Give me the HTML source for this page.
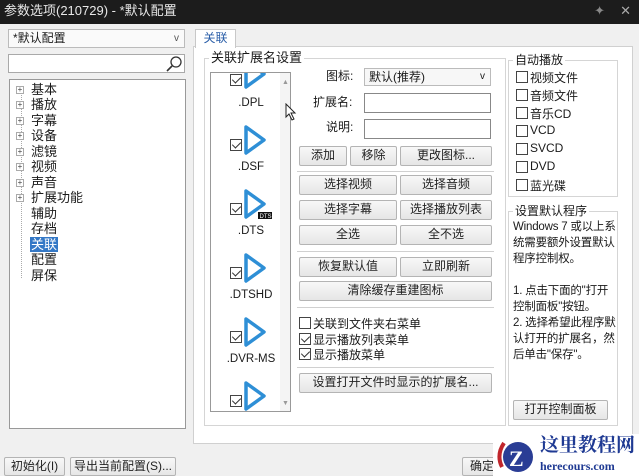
<!DOCTYPE html>
<html><head><meta charset="utf-8"><style>
*{box-sizing:border-box;margin:0;padding:0}
body{width:639px;height:476px;position:relative;overflow:hidden;background:#f0f0f0;font-family:"Liberation Sans","Noto Sans CJK SC",sans-serif;font-size:12px;color:#1a1a1a}
.a{position:absolute}
.title{left:0;top:0;width:639px;height:24px;background:#1c1c1c;color:#e8e8e8;font-size:13px;line-height:22px;padding-left:4px}
.box{position:absolute;background:#fff;border:1px solid #a9a9a9}
.btn{position:absolute;background:linear-gradient(#f8f8f8,#e6e6e6);border:1px solid #b4b4b4;border-radius:2px;text-align:center;line-height:17px;font-size:12px;color:#222;white-space:nowrap}
.grp{position:absolute;border:1px solid #d5d5d5}
.gl{position:absolute;background:#fff;padding:0 2px;line-height:14px}
.cb{position:absolute;width:12px;height:12px;border:1px solid #444;background:#fff}
.ck::after{content:"";position:absolute;left:3px;top:0px;width:4px;height:7px;border:solid #333;border-width:0 1.5px 1.5px 0;transform:rotate(45deg)}
.sep{position:absolute;height:1px;background:#d0d0d0}
.ti{position:absolute;left:22px;line-height:15px;font-size:13px}
.pl{position:absolute;width:8px;height:8px;border:1px solid #aaa;left:7px;font-size:8px;line-height:6px;text-align:center;color:#444;background:#fff}
.lab{position:absolute;font-size:11.5px;text-align:center;width:60px}
</style></head><body>
<div class="a title">参数选项(210729) - *默认配置<span style="position:absolute;right:34px;color:#888">✦</span><span style="position:absolute;right:8px;color:#aaa">✕</span></div>

<div class="box" style="left:8px;top:29px;width:177px;height:19px;border-color:#bbb;background:#fafafa;line-height:17px;padding-left:4px">*默认配置<span style="position:absolute;right:5px;font-size:10px;color:#555">v</span></div>
<div class="box" style="left:8px;top:54px;width:177px;height:19px">
<svg class="a" style="right:2px;top:1px" width="16" height="16"><circle cx="10" cy="6" r="5" fill="none" stroke="#333" stroke-width="1.3"/><line x1="6" y1="10" x2="1" y2="15" stroke="#333" stroke-width="1.6"/></svg></div>
<div class="box" style="left:9px;top:79px;width:177px;height:350px;border-color:#999">
<div class="a" style="left:11px;top:10px;width:1px;height:188px;border-left:1px dotted #aaa"></div>
</div>
<div class="a" style="left:9px;top:82px;width:177px;height:345px">
<div class="pl" style="top:4px">+</div><div class="ti" style="top:0">基本</div>
<div class="pl" style="top:19px">+</div><div class="ti" style="top:15px">播放</div>
<div class="pl" style="top:35px">+</div><div class="ti" style="top:31px">字幕</div>
<div class="pl" style="top:50px">+</div><div class="ti" style="top:46px">设备</div>
<div class="pl" style="top:66px">+</div><div class="ti" style="top:62px">滤镜</div>
<div class="pl" style="top:81px">+</div><div class="ti" style="top:77px">视频</div>
<div class="pl" style="top:97px">+</div><div class="ti" style="top:93px">声音</div>
<div class="pl" style="top:112px">+</div><div class="ti" style="top:108px">扩展功能</div>
<div class="ti" style="top:124px">辅助</div>
<div class="ti" style="top:139px">存档</div>
<div class="ti" style="top:155px;background:#3478c6;color:#fff;padding:0 1px;left:21px">关联</div>
<div class="ti" style="top:170px">配置</div>
<div class="ti" style="top:186px">屏保</div>
</div>

<div class="box" style="left:193px;top:46px;width:440px;height:398px;border-color:#d0d0d0"></div>
<div class="a" style="left:195px;top:29px;width:41px;height:19px;background:#fff;border:1px solid #c8c8c8;border-bottom:none;text-align:center;line-height:17px;color:#2a5ea8">关联</div>

<div class="grp" style="left:204px;top:58px;width:302px;height:368px"></div>
<div class="gl" style="left:209px;top:51px;font-size:13px">关联扩展名设置</div>
<div class="box" style="left:210px;top:72px;width:81px;height:340px;border-color:#999;overflow:hidden">
<div class="a" style="left:69px;top:0;width:10px;height:338px;background:#f4f4f4"></div>
<div class="a" style="left:71px;top:6px;font-size:7px;color:#999">▲</div>
<div class="a" style="left:71px;top:327px;font-size:7px;color:#999">▼</div>
<svg class="a" style="left:0;top:0" width="70" height="340">
<g fill="none" stroke="#2e8fd6" stroke-width="3.5" stroke-linejoin="round">
<path d="M35 -12 L53 1 L35 14 Z"/>
<path d="M35 54 L53 67 L35 80 Z"/>
<path d="M35 118 L53 131 L35 144 Z"/>
<path d="M35 182 L53 195 L35 208 Z"/>
<path d="M35 246 L53 259 L35 272 Z"/>
<path d="M35 310 L53 323 L35 336 Z"/>
</g>
<rect x="47" y="139" width="14" height="7" fill="#111"/>
<text x="48.5" y="145" font-size="6" fill="#fff" font-family="Liberation Sans">DTS</text>
</svg>
<div class="cb ck" style="left:19px;top:1px"></div>
<div class="cb ck" style="left:19px;top:66px"></div>
<div class="cb ck" style="left:19px;top:130px"></div>
<div class="cb ck" style="left:19px;top:194px"></div>
<div class="cb ck" style="left:19px;top:258px"></div>
<div class="cb ck" style="left:19px;top:322px"></div>
<div class="lab" style="left:10px;top:24px">.DPL</div>
<div class="lab" style="left:10px;top:88px">.DSF</div>
<div class="lab" style="left:10px;top:152px">.DTS</div>
<div class="lab" style="left:10px;top:216px">.DTSHD</div>
<div class="lab" style="left:10px;top:280px">.DVR-MS</div>
</div>
<svg class="a" style="left:285px;top:103px" width="12" height="18"><path d="M1 1 L1 14 L4 11 L7 17 L9 16 L6 10 L10 10 Z" fill="#fff" stroke="#222"/></svg>

<div class="a" style="left:326px;top:68px;line-height:17px">图标:</div>
<div class="box" style="left:364px;top:68px;width:127px;height:18px;background:#f7f7f7;border-color:#bbb;line-height:16px;padding-left:4px">默认(推荐)<span style="position:absolute;right:5px;font-size:10px">v</span></div>
<div class="a" style="left:313px;top:94px;line-height:17px">扩展名:</div>
<div class="box" style="left:364px;top:93px;width:127px;height:20px;border-color:#888"></div>
<div class="a" style="left:326px;top:119px;line-height:17px">说明:</div>
<div class="box" style="left:364px;top:119px;width:127px;height:20px;border-color:#888"></div>

<div class="btn" style="left:299px;top:146px;width:48px;height:20px">添加</div>
<div class="btn" style="left:350px;top:146px;width:47px;height:20px">移除</div>
<div class="btn" style="left:400px;top:146px;width:92px;height:20px">更改图标...</div>
<div class="sep" style="left:297px;top:171px;width:197px"></div>
<div class="btn" style="left:299px;top:175px;width:98px;height:20px">选择视频</div>
<div class="btn" style="left:400px;top:175px;width:92px;height:20px">选择音频</div>
<div class="btn" style="left:299px;top:200px;width:98px;height:20px">选择字幕</div>
<div class="btn" style="left:400px;top:200px;width:92px;height:20px">选择播放列表</div>
<div class="btn" style="left:299px;top:225px;width:98px;height:20px">全选</div>
<div class="btn" style="left:400px;top:225px;width:92px;height:20px">全不选</div>
<div class="sep" style="left:297px;top:251px;width:197px"></div>
<div class="btn" style="left:299px;top:257px;width:98px;height:20px">恢复默认值</div>
<div class="btn" style="left:400px;top:257px;width:92px;height:20px">立即刷新</div>
<div class="btn" style="left:299px;top:281px;width:193px;height:20px">清除缓存重建图标</div>
<div class="sep" style="left:297px;top:307px;width:197px"></div>
<div class="cb" style="left:299px;top:317px"></div><div class="a" style="left:313px;top:315px">关联到文件夹右菜单</div>
<div class="cb ck" style="left:299px;top:333px"></div><div class="a" style="left:313px;top:331px">显示播放列表菜单</div>
<div class="cb ck" style="left:299px;top:348px"></div><div class="a" style="left:313px;top:346px">显示播放菜单</div>
<div class="sep" style="left:297px;top:367px;width:197px"></div>
<div class="btn" style="left:299px;top:373px;width:193px;height:20px">设置打开文件时显示的扩展名...</div>

<div class="grp" style="left:508px;top:60px;width:110px;height:137px"></div>
<div class="gl" style="left:513px;top:53px">自动播放</div>
<div class="cb" style="left:516px;top:71px"></div><div class="a" style="left:530px;top:69px">视频文件</div>
<div class="cb" style="left:516px;top:89px"></div><div class="a" style="left:530px;top:87px">音频文件</div>
<div class="cb" style="left:516px;top:107px"></div><div class="a" style="left:530px;top:105px">音乐CD</div>
<div class="cb" style="left:516px;top:125px"></div><div class="a" style="left:530px;top:123px">VCD</div>
<div class="cb" style="left:516px;top:143px"></div><div class="a" style="left:530px;top:141px">SVCD</div>
<div class="cb" style="left:516px;top:161px"></div><div class="a" style="left:530px;top:159px">DVD</div>
<div class="cb" style="left:516px;top:179px"></div><div class="a" style="left:530px;top:177px">蓝光碟</div>

<div class="grp" style="left:508px;top:211px;width:110px;height:215px"></div>
<div class="gl" style="left:513px;top:204px">设置默认程序</div>
<div class="a" style="left:513px;top:219px;line-height:16px;font-size:11.5px;white-space:nowrap;letter-spacing:-0.2px">Windows 7 或以上系<br>统需要额外设置默认<br>程序控制权。<br><br>1. 点击下面的"打开<br>控制面板"按钮。<br>2. 选择希望此程序默<br>认打开的扩展名，然<br>后单击"保存"。</div>
<div class="btn" style="left:513px;top:400px;width:95px;height:20px">打开控制面板</div>

<div class="btn" style="left:4px;top:457px;width:61px;height:19px">初始化(I)</div>
<div class="btn" style="left:70px;top:457px;width:106px;height:19px">导出当前配置(S)...</div>
<div class="btn" style="left:462px;top:457px;width:40px;height:19px">确定</div>

<div class="a" style="left:493px;top:434px;width:146px;height:42px;background:#fff"></div>
<svg class="a" style="left:494px;top:435px" width="46" height="41"><path d="M10 8 Q2 20 8 32" fill="none" stroke="#c0262c" stroke-width="4"/><circle cx="24" cy="22" r="15" fill="#2a3d95"/><text x="15" y="31" font-size="22" font-weight="bold" fill="#fff" font-family="Liberation Serif">Z</text></svg>
<div class="a" style="left:540px;top:434px;font-size:19px;font-weight:bold;color:#1f3a93;font-family:'Liberation Serif','Noto Serif CJK SC',serif;line-height:24px;white-space:nowrap">这里教程网</div>
<div class="a" style="left:540px;top:459px;font-size:12px;font-weight:bold;color:#1f3a93;font-family:'Liberation Serif',serif;white-space:nowrap">herecours.com</div>
</body></html>
